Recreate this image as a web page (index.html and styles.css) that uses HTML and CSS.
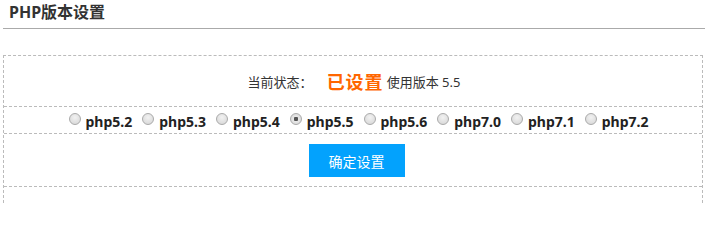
FILE: index.html
```html
<!DOCTYPE html>
<html lang="zh-CN">
<head>
<meta charset="utf-8">
<title>PHP版本设置</title>
<link rel="stylesheet" href="styles.css">
</head>
<body>
<div class="page">
  <div class="title">PHP版本设置</div>
  <div class="box">
    <div class="row status">
      <span class="label">当前状态：</span>
      <span class="state">已设置</span>
      <span class="ver">使用版本 5.5</span>
    </div>
    <div class="row versions">
      <label class="opt"><input type="radio" name="v"><span>php5.2</span></label>
      <label class="opt"><input type="radio" name="v"><span>php5.3</span></label>
      <label class="opt"><input type="radio" name="v"><span>php5.4</span></label>
      <label class="opt"><input type="radio" name="v" checked><span>php5.5</span></label>
      <label class="opt"><input type="radio" name="v"><span>php5.6</span></label>
      <label class="opt"><input type="radio" name="v"><span>php7.0</span></label>
      <label class="opt"><input type="radio" name="v"><span>php7.1</span></label>
      <label class="opt"><input type="radio" name="v"><span>php7.2</span></label>
    </div>
    <div class="row actions">
      <button class="btn" type="button">确定设置</button>
    </div>
    <div class="row last"></div>
  </div>
</div>
</body>
</html>
```

FILE: styles.css
```css
html, body {
  margin: 0;
  padding: 0;
  background: #fff;
  overflow: hidden;
}
body {
  font-family: "Noto Sans", "Noto Sans CJK SC", sans-serif;
  color: #333;
}
.page {
  padding: 0 0 0 3px;
}
.title {
  height: 28px;
  line-height: 24px;
  padding-left: 6px;
  font-size: 16px;
  font-weight: bold;
  color: #333;
  border-bottom: 1px solid #aaa;
}
.box {
  margin-top: 26px;
  width: 698px;
  border: 1px dashed #bbb;
  border-bottom: none;
}
.row {
  border-bottom: 1px dashed #bbb;
}
.status {
  height: 50px;
  display: flex;
  align-items: center;
  justify-content: center;
  font-size: 13px;
  padding-left: 2px;
}
.status .label {
  margin-right: 14px;
}
.status .state {
  font-size: 18px;
  font-weight: bold;
  letter-spacing: 1px;
  color: #ff6600;
  margin-right: 3px;
}
.versions {
  height: 26px;
  display: flex;
  align-items: center;
  justify-content: center;
  padding-left: 11px;
  gap: 10px;
  font-size: 14px;
  font-weight: bold;
  color: #222;
}
.opt {
  display: flex;
  align-items: center;
  gap: 5px;
}
.opt span {
  position: relative;
  top: 1px;
}
.opt input {
  -webkit-appearance: none;
  appearance: none;
  margin: 0;
  width: 12px;
  height: 12px;
  border-radius: 50%;
  border: 1px solid #aaa;
  background: radial-gradient(circle at 50% 35%, #f2f2f2 0%, #d4d4d4 100%);
  box-sizing: border-box;
  position: relative;
  top: -1px;
}
.opt input:checked {
  background: radial-gradient(circle, #555 0, #555 2px, #e8e8e8 2.5px, #d4d4d4 100%);
}
.actions {
  height: 52px;
  display: flex;
  align-items: flex-start;
  justify-content: center;
  padding-left: 7px;
}
.btn {
  margin-top: 10px;
  width: 96px;
  height: 33px;
  border: none;
  background: #03a2fd;
  color: #fff;
  font-family: "Noto Sans CJK SC", sans-serif;
  font-size: 14px;
  padding: 0;
}
.last {
  height: 16px;
  border-bottom: none;
}
```
